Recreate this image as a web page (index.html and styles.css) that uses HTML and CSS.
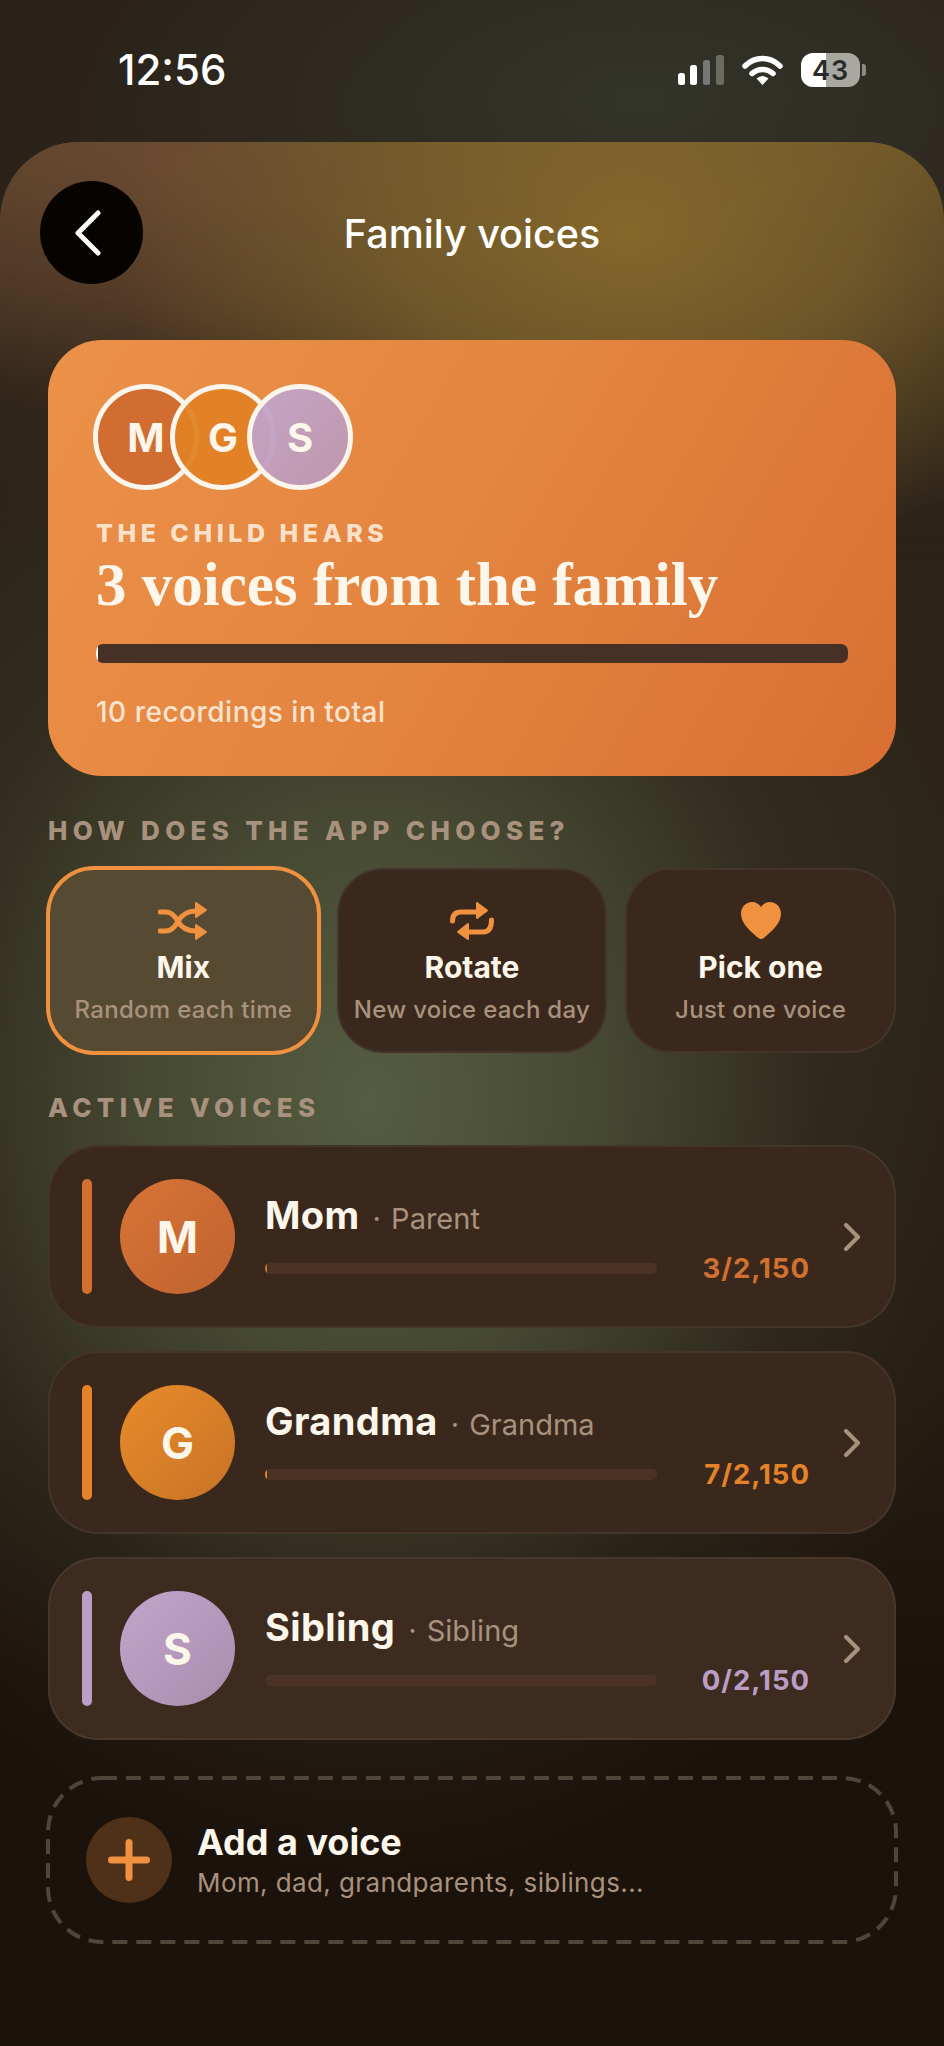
FILE: index.html
```html
<!DOCTYPE html>
<html lang="en">
<head>
<meta charset="utf-8">
<title>Family voices</title>
<link rel="stylesheet" href="styles.css">
</head>
<body>
<main class="screen">
  <header class="status">
    <span class="clock">12:56</span>
    <div class="status-icons">
      <svg class="signal" width="47" height="30" viewBox="0 0 47 30"><rect x="0" y="18" width="7" height="12" rx="2.5" fill="#fff"/><rect x="12" y="10" width="7" height="20" rx="2.5" fill="#fff"/><rect x="25" y="5" width="7" height="25" rx="2.5" fill="#777"/><rect x="38" y="0" width="8" height="30" rx="2.5" fill="#6b6b62"/></svg>
      <svg class="wifi" width="41" height="30" viewBox="0 0 41 30"><path d="M3 11C13 1 28 1 38 11" fill="none" stroke="#fff" stroke-width="5.5" stroke-linecap="round"/><path d="M10 18.500C16 13 25 13 31 18.500" fill="none" stroke="#fff" stroke-width="5.500" stroke-linecap="round"/><path d="M14.500 23.500Q20.500 18.500 26.500 23.500L20.500 30Z" fill="#fff"/></svg>
      <div class="battery"><span class="battery-level">43</span></div>
      <span class="battery-nub"></span>
    </div>
  </header>

  <section class="sheet">
    <div class="topbar">
      <button class="back" type="button" aria-label="Back">
        <svg width="30" height="46" viewBox="0 0 30 46"><path d="M25 3L5 23L25 43" fill="none" stroke="#fff" stroke-width="5" stroke-linecap="round" stroke-linejoin="round"/></svg>
      </button>
      <h1 class="title">Family voices</h1>
    </div>

    <div class="hero">
      <div class="stack">
        <span class="stack-dot mom">M</span>
        <span class="stack-dot grandma">G</span>
        <span class="stack-dot sibling">S</span>
      </div>
      <p class="hero-eyebrow">THE CHILD HEARS</p>
      <h2 class="hero-title">3 voices from the family</h2>
      <div class="hero-track"><span class="hero-fill"></span></div>
      <p class="hero-note">10 recordings in total</p>
    </div>

    <h3 class="section-label first">HOW DOES THE APP CHOOSE?</h3>
    <div class="modes">
      <div class="mode active">
        <svg class="mode-icon" width="50" height="40" viewBox="0 0 50 40"><path d="M2 11H8C14 11 17 15 20 20.500C23 26 28 30 38 30M2 30H8C14 30 17 26 20 20.500C23 15 28 10 38 10" fill="none" stroke="#f0913f" stroke-width="5" stroke-linecap="round"/><path d="M38 2L48 9L38 16Z M38 24L48 31L38 38Z" fill="#f0913f" stroke="#f0913f" stroke-width="2" stroke-linejoin="round"/></svg>
        <span class="mode-name">Mix</span>
        <span class="mode-sub">Random each time</span>
      </div>
      <div class="mode">
        <svg class="mode-icon" width="46" height="40" viewBox="0 0 46 40"><path d="M3.500 20C3.500 14 6 11 12 11H29" fill="none" stroke="#f0913f" stroke-width="5" stroke-linecap="round"/><path d="M42.500 19C42.500 27 40 31 34 31H18" fill="none" stroke="#f0913f" stroke-width="5" stroke-linecap="round"/><path d="M28 2L38 9.500L28 17Z M19 23L9 31L19 38Z" fill="#f0913f" stroke="#f0913f" stroke-width="2" stroke-linejoin="round"/></svg>
        <span class="mode-name">Rotate</span>
        <span class="mode-sub">New voice each day</span>
      </div>
      <div class="mode">
        <svg class="mode-icon" width="40" height="38" viewBox="0 0 40 38"><path d="M20 37C19 37 18 36.500 16 35C8 28 0 21 0 11.500C0 5 5 0 11 0C15 0 18 2 20 5C22 2 25 0 29 0C35 0 40 5 40 11.500C40 21 32 28 24 35C22 36.500 21 37 20 37Z" fill="#f0913f"/></svg>
        <span class="mode-name">Pick one</span>
        <span class="mode-sub">Just one voice</span>
      </div>
    </div>

    <h3 class="section-label second">ACTIVE VOICES</h3>
    <div class="voices">
      <article class="voice mom-voice">
        <span class="voice-bar"></span>
        <span class="voice-avatar">M</span>
        <div class="voice-body">
          <div class="voice-head"><span class="voice-name">Mom</span><span class="voice-role">· Parent</span></div>
          <div class="voice-meter"><div class="voice-track"><span class="voice-fill"></span></div><span class="voice-count">3/2,150</span></div>
        </div>
        <svg class="voice-chevron" width="18" height="28" viewBox="0 0 18 28"><path d="M3 2L15 14L3 26" fill="none" stroke="#a8927d" stroke-width="4" stroke-linecap="round" stroke-linejoin="round"/></svg>
      </article>
      <article class="voice grandma-voice">
        <span class="voice-bar"></span>
        <span class="voice-avatar">G</span>
        <div class="voice-body">
          <div class="voice-head"><span class="voice-name">Grandma</span><span class="voice-role">· Grandma</span></div>
          <div class="voice-meter"><div class="voice-track"><span class="voice-fill"></span></div><span class="voice-count">7/2,150</span></div>
        </div>
        <svg class="voice-chevron" width="18" height="28" viewBox="0 0 18 28"><path d="M3 2L15 14L3 26" fill="none" stroke="#a8927d" stroke-width="4" stroke-linecap="round" stroke-linejoin="round"/></svg>
      </article>
      <article class="voice sibling-voice">
        <span class="voice-bar"></span>
        <span class="voice-avatar">S</span>
        <div class="voice-body">
          <div class="voice-head"><span class="voice-name">Sibling</span><span class="voice-role">· Sibling</span></div>
          <div class="voice-meter"><div class="voice-track"></div><span class="voice-count">0/2,150</span></div>
        </div>
        <svg class="voice-chevron" width="18" height="28" viewBox="0 0 18 28"><path d="M3 2L15 14L3 26" fill="none" stroke="#a8927d" stroke-width="4" stroke-linecap="round" stroke-linejoin="round"/></svg>
      </article>
    </div>

    <div class="add">
      <svg class="add-outline" width="852" height="168" viewBox="0 0 852 168"><rect x="2" y="2" width="848" height="164" rx="54" fill="none" stroke="#4f463a" stroke-width="4" stroke-dasharray="15 9"/></svg>
      <span class="add-icon"><svg width="42" height="42" viewBox="0 0 42 42"><path d="M21 3.500V38.500M3.500 21H38.500" fill="none" stroke="#f0913f" stroke-width="7" stroke-linecap="round"/></svg></span>
      <div class="add-text">
        <span class="add-title">Add a voice</span>
        <span class="add-sub">Mom, dad, grandparents, siblings...</span>
      </div>
    </div>
  </section>
</main>
</body>
</html>
```
FILE: styles.css
```css
* { box-sizing: border-box; }
html, body { margin: 0; padding: 0; background: #1b120b; }
body { font-family: Inter, "Noto Sans", sans-serif; color: #fdf6ea; }
h1, h2, h3, p { margin: 0; }

.screen {
  width: 944px;
  height: 2046px;
  overflow: hidden;
  background:
    radial-gradient(ellipse 640px 780px at 370px 1100px, rgba(88,96,68,0.95) 0%, rgba(80,86,60,0.76) 35%, rgba(60,60,42,0.34) 70%, rgba(50,50,35,0) 100%),
    radial-gradient(ellipse 620px 300px at 640px 100px, rgba(52,54,44,0.9) 0%, rgba(52,54,44,0) 100%),
    linear-gradient(180deg, #2a2118 0%, #2c2419 40%, #261c12 68%, #1b120b 82%, #1b120b 100%);
}

.status {
  height: 142px;
  display: flex;
  justify-content: space-between;
  padding: 48px 78px 0 118px;
}
.clock { font-size: 42px; font-weight: 500; line-height: 44px; color: #fff; }
.status-icons { display: flex; align-items: flex-start; padding-top: 5px; }
.signal { margin: 2px 0 0 0; }
.wifi { margin: 2px 0 0 17px; }
.battery {
  width: 59px;
  height: 34px;
  margin-left: 18px;
  border-radius: 12px;
  background: linear-gradient(90deg, #fff 0%, #fff 42%, #a8a8a0 42%, #a8a8a0 100%);
  display: flex;
  align-items: center;
  justify-content: center;
}
.battery-level { font-size: 27px; font-weight: 600; color: #2b2b2b; line-height: 1; letter-spacing: 1px; }
.battery-nub { width: 4px; height: 12px; margin: 11px 0 0 2px; border-radius: 0 3px 3px 0; background: #8c8c84; }

.sheet {
  height: 1904px;
  padding: 39px 48px 0;
  border-radius: 78px 78px 0 0;
  background:
    radial-gradient(ellipse 520px 340px at 630px 90px, rgba(136,106,44,0.95) 0%, rgba(124,98,44,0.78) 45%, rgba(110,85,40,0) 100%),
    radial-gradient(ellipse 420px 260px at 170px 20px, rgba(106,72,52,0.9) 0%, rgba(100,70,48,0.55) 55%, rgba(90,60,40,0) 100%),
    linear-gradient(180deg, rgba(108,82,42,0.85) 0%, rgba(80,60,36,0.6) 90px, rgba(60,44,28,0.45) 220px, rgba(60,44,28,0) 420px);
}

.topbar {
  display: grid;
  grid-template-columns: 103px 1fr 103px;
  align-items: center;
  height: 102px;
  margin: 0 -8px;
}
.back {
  width: 103px;
  height: 103px;
  padding: 0 8px 0 0;
  border: 0;
  border-radius: 50%;
  background: #060300;
  display: flex;
  align-items: center;
  justify-content: center;
}
.title { font-size: 39.500px; font-weight: 500; line-height: 46px; color: #fff; text-align: center; padding-top: 2px; }

.hero {
  height: 436px;
  margin-top: 57px;
  padding: 44px 48px 0;
  border-radius: 54px;
  background: linear-gradient(120deg, #ec9149 0%, #e3843f 50%, #d96f33 100%);
}
.stack { display: flex; }
.stack-dot {
  width: 106px;
  height: 106px;
  border: 5px solid #fbf5ec;
  border-radius: 50%;
  margin-left: -29px;
  display: flex;
  align-items: center;
  justify-content: center;
  font-size: 40px;
  font-weight: 700;
  color: #fdf6ea;
}
.stack-dot:first-child { margin-left: -3px; }
.stack-dot.mom { background: rgba(208,108,48,0.95); }
.stack-dot.grandma { background: rgba(226,128,36,0.93); }
.stack-dot.sibling { background: linear-gradient(135deg, rgba(194,165,204,0.95), rgba(189,152,178,0.95)); }

.hero-eyebrow { margin-top: 28px; font-size: 25px; line-height: 30px; font-weight: 800; letter-spacing: 4.500px; color: rgba(255,246,232,0.82); }
.hero-title { margin-top: 3px; font-family: "Liberation Serif", serif; font-size: 61px; line-height: 68px; font-weight: 700; color: #fdf6ea; }
.hero-track { height: 19px; margin-top: 25px; border-radius: 7px; background: #473025; overflow: hidden; }
.hero-fill { display: block; width: 2px; height: 100%; background: #fbf5ec; }
.hero-note { margin-top: 32px; font-size: 28px; line-height: 34px; font-weight: 500; color: rgba(255,246,232,0.86); letter-spacing: 0.5px; }

.section-label { font-size: 26px; line-height: 32px; font-weight: 800; letter-spacing: 5.300px; color: #a8927d; }
.section-label.first { margin-top: 39px; }
.section-label.second { margin-top: 39px; }

.modes { display: grid; grid-template-columns: repeat(3, 1fr); gap: 18px; margin-top: 21px; }
.mode {
  height: 185px;
  padding-top: 31px;
  border: 2px solid rgba(255,255,255,0.06);
  border-radius: 46px;
  background: #3a281c;
  display: flex;
  flex-direction: column;
  align-items: center;
}
.mode.active { background: #574a33; border-color: #f0913f; box-shadow: 0 0 0 2px #f0913f; }
.mode-icon { height: 40px; }
.mode-name { margin-top: 8px; font-size: 30px; line-height: 36px; font-weight: 700; color: #fdf6ea; }
.mode-sub { margin-top: 11px; font-size: 24px; line-height: 28px; font-weight: 500; color: #a8927d; letter-spacing: 0.3px; white-space: nowrap; }

.voices { display: flex; flex-direction: column; gap: 23px; margin-top: 21px; }
.voice {
  height: 183px;
  padding: 0 33px 0 32px;
  border: 2px solid rgba(255,255,255,0.06);
  border-radius: 50px;
  background: #3a281c;
  display: flex;
  align-items: center;
}
.voice.sibling-voice { background: #3d2b1f; }
.voice-bar { width: 10px; height: 115px; border-radius: 5px; }
.voice-avatar {
  width: 115px;
  height: 115px;
  margin-left: 28px;
  border-radius: 50%;
  display: flex;
  align-items: center;
  justify-content: center;
  font-size: 44px;
  font-weight: 700;
  color: #fdf6ea;
}
.mom-voice .voice-bar, .mom-voice .voice-fill { background: #d2702f; }
.mom-voice .voice-avatar { background: linear-gradient(135deg, #d87437, #bf632f); }
.mom-voice .voice-count { color: #d2702f; }
.grandma-voice .voice-bar, .grandma-voice .voice-fill { background: #e5832a; }
.grandma-voice .voice-avatar { background: linear-gradient(135deg, #e78a2a, #c87426); }
.grandma-voice .voice-count { color: #e5832a; }
.sibling-voice .voice-bar { background: #bb9dc6; }
.sibling-voice .voice-avatar { background: linear-gradient(135deg, #c3a5cd, #a98cac); }
.sibling-voice .voice-count { color: #bb9dc6; }

.voice-body { flex: 1; align-self: flex-start; margin: 45px 0 0 30px; min-width: 0; }
.voice-head { display: flex; align-items: baseline; height: 46px; }
.voice-name { font-size: 38px; line-height: 46px; font-weight: 700; color: #fdf6ea; letter-spacing: 0.4px; }
.voice-role { margin-left: 13px; font-size: 29px; line-height: 46px; font-weight: 400; color: #a8927d; word-spacing: 2px; }
.voice-meter { display: flex; align-items: center; margin-top: 14px; padding-right: 12px; }
.voice-track { width: 392px; height: 11px; border-radius: 5px; background: #4a3325; overflow: hidden; }
.voice-fill { display: block; width: 2px; height: 100%; }
.voice-count { margin-left: auto; font-size: 27.500px; line-height: 32px; font-weight: 700; letter-spacing: 1px; }
.voice-chevron { flex: none; margin-left: 21px; }

.add {
  position: relative;
  height: 168px;
  margin: 36px -2px 0;
  padding-left: 40px;
  display: flex;
  align-items: center;
}
.add-outline { position: absolute; left: 0; top: 0; }
.add-icon {
  width: 86px;
  height: 86px;
  border-radius: 50%;
  background: #4e3118;
  display: flex;
  align-items: center;
  justify-content: center;
}
.add-text { margin-left: 25px; display: flex; flex-direction: column; }
.add-title { font-size: 36px; line-height: 42px; font-weight: 700; color: #fdf6ea; }
.add-sub { margin-top: 4px; font-size: 26px; line-height: 32px; font-weight: 400; color: #a8927d; letter-spacing: 0.4px; }
```
